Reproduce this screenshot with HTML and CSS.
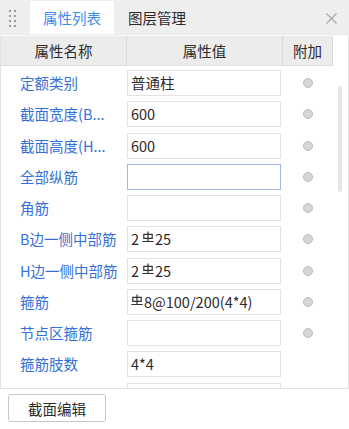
FILE: index.html
```html
<!DOCTYPE html>
<html lang="zh">
<head>
<meta charset="utf-8">
<link rel="stylesheet" href="styles.css">
</head>
<body>
<div class="tabbar">
  <div class="grip">
    <svg width="10" height="20" viewBox="0 0 10 20"><g fill="#9a9a9a"><rect x="0" y="0" width="2" height="2"/><rect x="5" y="0" width="2" height="2"/><rect x="0" y="5" width="2" height="2"/><rect x="5" y="5" width="2" height="2"/><rect x="0" y="10" width="2" height="2"/><rect x="5" y="10" width="2" height="2"/><rect x="0" y="15" width="2" height="2"/><rect x="5" y="15" width="2" height="2"/></g></svg>
  </div>
  <div class="tab active">属性列表</div>
  <div class="tab">图层管理</div>
  <div class="close"><svg width="11" height="11" viewBox="0 0 11 11"><path d="M0.5 0.5L10.5 10.5M10.5 0.5L0.5 10.5" stroke="#a8a8a8" stroke-width="1.2" fill="none"/></svg></div>
</div>
<div class="panel">
  <div class="header">
    <div class="hcell">属性名称</div>
    <div class="hcell sep">属性值</div>
    <div class="hcell sep last">附加</div>
  </div>
  <div class="body">
    <div class="row"><div class="label">定额类别</div><div class="value">普通柱</div><div class="extra"><span class="radio"></span></div></div>
    <div class="row"><div class="label">截面宽度(B...</div><div class="value">600</div><div class="extra"><span class="radio"></span></div></div>
    <div class="row"><div class="label">截面高度(H...</div><div class="value">600</div><div class="extra"><span class="radio"></span></div></div>
    <div class="row"><div class="label">全部纵筋</div><div class="value focus"></div><div class="extra"><span class="radio"></span></div></div>
    <div class="row"><div class="label">角筋</div><div class="value"></div><div class="extra"><span class="radio"></span></div></div>
    <div class="row"><div class="label">B边一侧中部筋</div><div class="value">2<svg class="steel" width="12" height="12" viewBox="0 0 12 12"><path d="M6 0.5V10M1.8 3.4H10.2V7.4H1.8ZM0.3 10.5H11.7" stroke="#333" stroke-width="1.2" fill="none"/></svg>25</div><div class="extra"><span class="radio"></span></div></div>
    <div class="row"><div class="label">H边一侧中部筋</div><div class="value">2<svg class="steel" width="12" height="12" viewBox="0 0 12 12"><path d="M6 0.5V10M1.8 3.4H10.2V7.4H1.8ZM0.3 10.5H11.7" stroke="#333" stroke-width="1.2" fill="none"/></svg>25</div><div class="extra"><span class="radio"></span></div></div>
    <div class="row"><div class="label">箍筋</div><div class="value"><svg class="steel first" width="12" height="12" viewBox="0 0 12 12"><path d="M6 0.5V10M1.8 3.4H10.2V7.4H1.8ZM0.3 10.5H11.7" stroke="#333" stroke-width="1.2" fill="none"/></svg>8@100/200(4*4)</div><div class="extra"><span class="radio"></span></div></div>
    <div class="row"><div class="label">节点区箍筋</div><div class="value"></div><div class="extra"><span class="radio"></span></div></div>
    <div class="row"><div class="label">箍筋肢数</div><div class="value">4*4</div><div class="extra"></div></div>
    <div class="row"><div class="label"></div><div class="value"></div><div class="extra"></div></div>
    <div class="scroll"></div>
  </div>
</div>
<div class="footer">
  <button class="btn">截面编辑</button>
</div>
</body>
</html>
```
FILE: styles.css
```css
* { box-sizing: border-box; }
html, body { margin: 0; padding: 0; }
body {
  width: 349px;
  height: 429px;
  overflow: hidden;
  background: #ffffff;
  font-family: "Noto Sans CJK SC", "Noto Sans", sans-serif;
  font-size: 14.5px;
  color: #333333;
}
.tabbar {
  height: 36px;
  background: #eeeeee;
  display: flex;
  align-items: stretch;
  border-bottom: 1px solid #f7f7f7;
}
.grip {
  width: 30px;
  padding: 10px 0 0 9px;
}
.grip svg { display: block; }
.tab {
  display: flex;
  align-items: center;
  padding-left: 14px;
  color: #2b2b2b;
}
.tab.active {
  width: 84px;
  justify-content: center;
  padding-left: 0;
  margin: 1px 0;
  background: #ffffff;
  color: #3f8cf0;
}
.close {
  margin-left: auto;
  width: 23px;
  padding-top: 13px;
}
.close svg { display: block; }
.panel {
  height: 353px;
  border: 1px solid #e2e2e2;
  border-top: none;
  display: flex;
  flex-direction: column;
}
.header {
  display: grid;
  grid-template-columns: 125px 156px 51px;
  height: 30px;
  flex: none;
}
.hcell {
  background: #ececec;
  display: flex;
  align-items: center;
  justify-content: center;
  border-bottom: 1px solid #e0e0e0;
  color: #2b2b2b;
}
.hcell.sep { border-left: 1px solid #d9d9d9; }
.hcell.last { border-right: 1px solid #d9d9d9; }
.body {
  flex: 1;
  position: relative;
  overflow: hidden;
  padding-top: 4px;
}
.row {
  display: grid;
  grid-template-columns: 125px 156px 51px;
  height: 31.25px;
  align-items: start;
}
.label {
  height: 26px;
  line-height: 26px;
  padding-left: 19px;
  color: #3470d8;
  white-space: nowrap;
  overflow: hidden;
}
.value {
  margin-left: 1px;
  width: 154px;
  height: 26px;
  border: 1px solid #e2e2e2;
  padding-left: 3px;
  line-height: 24px;
  white-space: nowrap;
  overflow: hidden;
  color: #2b2b2b;
}
.value.focus { border-color: #9fb8ea; }
.steel {
  display: inline-block;
  vertical-align: 2px;
  margin: 0 1px 0 3px;
}
.steel.first { margin-left: 0; }
.extra {
  height: 26px;
  display: flex;
  align-items: center;
  justify-content: center;
}
.radio {
  width: 10px;
  height: 10px;
  border-radius: 50%;
  background: #d6d6d6;
  border: 1px solid #bdbdbd;
}
.scroll {
  position: absolute;
  left: 337px;
  top: 20px;
  width: 4px;
  height: 106px;
  border-radius: 2px;
  background: #e6e6e6;
}
.footer {
  padding: 5px 0 0 8px;
}
.btn {
  width: 98px;
  height: 28px;
  background: #ffffff;
  border: 1px solid #c8c8c8;
  border-radius: 3px;
  font-family: inherit;
  font-size: 14.5px;
  color: #2b2b2b;
  padding: 0;
}
```
